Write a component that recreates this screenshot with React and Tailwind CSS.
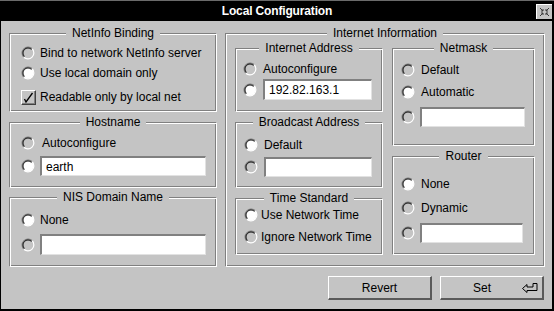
import React from "react";

const grey = "bg-[#c4c4c4]";

function Radio({ on }) {
  return (
    <svg width="14" height="14" viewBox="0 0 14 14" className="shrink-0">
      {on && <circle cx="7" cy="7" r="5.5" fill="#ffffff" />}
      <path d="M2.76 11.24 A6 6 0 0 1 11.24 2.76" stroke="#7a7a7a" strokeWidth="1.2" fill="none" />
      <path d="M3.46 10.54 A5 5 0 0 1 10.54 3.46" stroke="#000000" strokeWidth="0.9" fill="none" />
      <path d="M11.24 2.76 A6 6 0 0 1 2.76 11.24" stroke="#ffffff" strokeWidth="1.2" fill="none" />
    </svg>
  );
}

function Check() {
  return (
    <div className="w-[15px] h-[15px] shrink-0 border-t border-l border-t-white border-l-white border-b border-r border-b-[#404040] border-r-[#404040] shadow-[inset_-1px_-1px_0_#808080]">
      <svg width="13" height="13" viewBox="0 0 13 13">
        <path d="M2.5 8 L4 11 L10.5 2" stroke="#000" strokeWidth="1.3" fill="none" />
      </svg>
    </div>
  );
}

function Field({ w, h = 20, children }) {
  return (
    <div
      className={`${w} bg-white border-t-2 border-l-2 border-t-[#808080] border-l-[#808080] border-b border-r border-b-[#e2e2e2] border-r-[#e2e2e2] flex items-center pl-[4px] leading-none`}
      style={{ height: h }}
    >
      {children}
    </div>
  );
}

function Group({ title, className, children }) {
  return (
    <div
      className={`relative border border-t-[#808080] border-l-[#808080] border-b-white border-r-white shadow-[inset_1px_1px_0_#ffffff,inset_-1px_-1px_0_#808080] ${className}`}
    >
      <div className="absolute left-0 right-0 -top-[8px] flex justify-center">
        <span className={`${grey} px-[6px] leading-[14px]`}>{title}</span>
      </div>
      {children}
    </div>
  );
}

function Row({ on, gap = "gap-[6px]", className = "", children }) {
  return (
    <div className={`flex items-center h-[20px] ${gap} ${className}`}>
      <Radio on={on} />
      <span>{children}</span>
    </div>
  );
}

export default function App() {
  return (
    <div className="w-[554px] h-[311px] flex flex-col bg-black font-['Liberation_Sans',Arial,sans-serif] text-[12px] text-black">
      {/* title bar */}
      <div className="relative h-[21px] flex items-center justify-center border-t border-t-[#6a6a6a]">
        <span className="text-white font-bold text-[12px] tracking-[-0.15px]">Local Configuration</span>
        <div className="absolute right-[2px] top-[3px] w-[16px] h-[15px] bg-[#c4c4c4] border-t border-l border-t-white border-l-white">
          <svg width="15" height="14" viewBox="0 0 15 14">
            <g stroke="#3a3a3a" strokeWidth="1" fill="none">
              <path d="M3 3 L6 6 M4 6 L6 6 L6 4" />
              <path d="M12 3 L9 6 M11 6 L9 6 L9 4" />
              <path d="M3 11 L6 8 M4 8 L6 8 L6 10" />
              <path d="M12 11 L9 8 M11 8 L9 8 L9 10" />
            </g>
          </svg>
        </div>
      </div>

      {/* body */}
      <div className={`flex-1 ${grey} ml-[1px] mr-[2px] mb-[2px] flex flex-col`}>
        <div className="flex pt-[12px] pl-[8px] gap-[8px]">
          {/* left column */}
          <div className="w-[208px] flex flex-col">
            <Group title="NetInfo Binding" className="h-[79px] pt-[9px] pl-[11px]">
              <Row gap="gap-[5px]">Bind to network NetInfo server</Row>
              <Row on gap="gap-[5px]">Use local domain only</Row>
              <div className="flex items-center h-[20px] gap-[4px] mt-[4px]">
                <Check />
                <span>Readable only by local net</span>
              </div>
            </Group>

            <Group title="Hostname" className="h-[66px] mt-[10px] pt-[10px] pl-[11px]">
              <Row gap="gap-[7px]">Autoconfigure</Row>
              <div className="flex items-center gap-[5px] mt-[3px]">
                <Radio on />
                <Field w="w-[166px]">earth</Field>
              </div>
            </Group>

            <Group title="NIS Domain Name" className="h-[70px] mt-[9px] pt-[12px] pl-[11px]">
              <Row on gap="gap-[5px]">None</Row>
              <div className="flex items-center gap-[5px] mt-[4px]">
                <Radio />
                <Field w="w-[166px]" h={21} />
              </div>
            </Group>
          </div>

          {/* right group */}
          <Group title="Internet Information" className="w-[320px] h-[234px] pt-[14px] pl-[9px] flex gap-[9px]">
            <div className="w-[148px] flex flex-col">
              <Group title="Internet Address" className="h-[64px] pt-[10px] pl-[7px]">
                <Row>Autoconfigure</Row>
                <div className="flex items-center gap-[6px]">
                  <Radio on />
                  <Field w="w-[109px]" h={21}>192.82.163.1</Field>
                </div>
              </Group>

              <Group title="Broadcast Address" className="h-[66px] mt-[10px] pt-[12px] pl-[8px]">
                <Row on>Default</Row>
                <div className="flex items-center gap-[6px] mt-[2px]">
                  <Radio />
                  <Field w="w-[108px]" />
                </div>
              </Group>

              <Group title="Time Standard" className="h-[57px] mt-[10px] pt-[6px] pl-[8px]">
                <Row on gap="gap-[3px]">Use Network Time</Row>
                <Row gap="gap-[3px]" className="mt-[2px]">Ignore Network Time</Row>
              </Group>
            </div>

            <div className="w-[143px] flex flex-col">
              <Group title="Netmask" className="h-[98px] pt-[11px] pl-[8px]">
                <Row>Default</Row>
                <Row on className="mt-[2px]">Automatic</Row>
                <div className="flex items-center gap-[5px] mt-[5px]">
                  <Radio />
                  <Field w="w-[105px]" />
                </div>
              </Group>

              <Group title="Router" className="h-[99px] mt-[10px] pt-[17px] pl-[8px]">
                <Row on>None</Row>
                <Row className="mt-[4px]">Dynamic</Row>
                <div className="flex items-center gap-[5px] mt-[5px]">
                  <Radio />
                  <Field w="w-[103px]" />
                </div>
              </Group>
            </div>
          </Group>
        </div>

        {/* buttons */}
        <div className="flex justify-end gap-[8px] pr-[8px] mt-[9px]">
          <div className="w-[104px] h-[24px] flex items-center justify-center border-t border-l border-t-white border-l-white border-b-2 border-r-2 border-b-[#5a5a5a] border-r-[#5a5a5a]">
            Revert
          </div>
          <div className="w-[104px] h-[24px] flex items-center border-t border-l border-t-white border-l-white border-b-2 border-r-2 border-b-[#5a5a5a] border-r-[#5a5a5a]">
            <span className="flex-1 text-center pl-[2px]">Set</span>
            <svg width="18" height="12" viewBox="0 0 18 12" className="mr-[3px]">
              <path d="M1.5 6.5 L6 2.5 L6 5 L12 5 L12 1.5 L16 1.5 L16 8.5 L6 8.5 L6 10.5 Z" stroke="#000" strokeWidth="1" fill="none" />
            </svg>
          </div>
        </div>
      </div>
    </div>
  );
}
